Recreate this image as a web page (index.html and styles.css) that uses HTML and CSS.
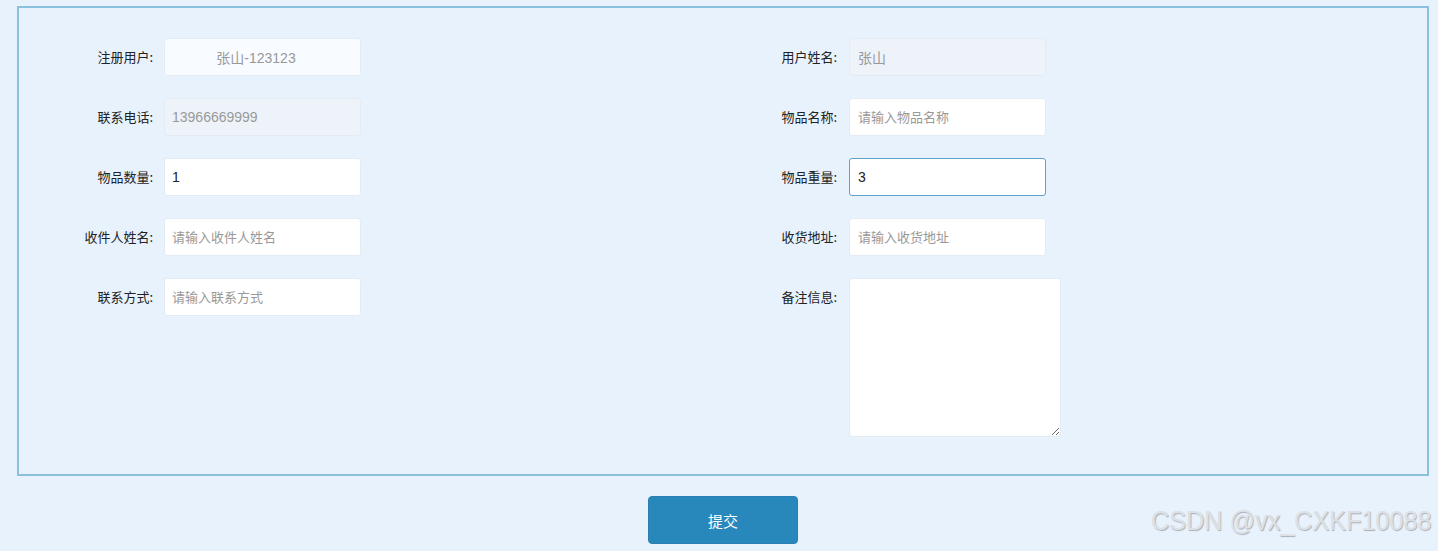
FILE: index.html
```
<!DOCTYPE html>
<html lang="zh-CN">
<head>
    <meta charset="UTF-8"/>
    <meta content="width=device-width, initial-scale=1.0" name="viewport"/>
    <title>物品寄送</title>
    <link rel="stylesheet" href="styles.css">
</head>
<body>
<form class="send-form">
    <div class="form-frame">
        <div class="form-col col-left">
            <div class="form-row">
                <label class="form-label">注册用户:</label>
                <input class="form-input readonly center" type="text" value="张山-123123" readonly>
            </div>
            <div class="form-row">
                <label class="form-label">联系电话:</label>
                <input class="form-input disabled" type="text" value="13966669999" readonly>
            </div>
            <div class="form-row">
                <label class="form-label">物品数量:</label>
                <input class="form-input" type="text" value="1">
            </div>
            <div class="form-row">
                <label class="form-label">收件人姓名:</label>
                <input class="form-input" type="text" placeholder="请输入收件人姓名">
            </div>
            <div class="form-row">
                <label class="form-label">联系方式:</label>
                <input class="form-input" type="text" placeholder="请输入联系方式">
            </div>
        </div>
        <div class="form-col">
            <div class="form-row">
                <label class="form-label">用户姓名:</label>
                <input class="form-input disabled" type="text" value="张山" readonly>
            </div>
            <div class="form-row">
                <label class="form-label">物品名称:</label>
                <input class="form-input" type="text" placeholder="请输入物品名称">
            </div>
            <div class="form-row">
                <label class="form-label">物品重量:</label>
                <input class="form-input focused" type="text" value="3">
            </div>
            <div class="form-row">
                <label class="form-label">收货地址:</label>
                <input class="form-input" type="text" placeholder="请输入收货地址">
            </div>
            <div class="form-row">
                <label class="form-label">备注信息:</label>
                <textarea class="form-textarea"></textarea>
            </div>
        </div>
    </div>

    <div class="form-actions">
        <button class="submit-button" type="button">提交</button>
    </div>
</form>

<div class="watermark">CSDN @vx_CXKF10088</div>
</body>
</html>
```
FILE: styles.css
```
/* Base */
body {
    margin: 0;
    padding: 6px 9px 0 17px;
    background-color: #e8f2fd;
    font-family: "Microsoft YaHei", "Noto Sans CJK SC", sans-serif;
    color: #333;
    height: 551px;
    box-sizing: border-box;
    overflow: hidden;
}

/* Frame holding both columns */
.form-frame {
    display: grid;
    grid-template-columns: 684px 1fr;
    border: 2px solid #8bc1dd;
    padding: 30px 0 37px 0;
}

.form-col {
    display: flex;
    flex-direction: column;
    gap: 22px;
}

.form-row {
    display: flex;
    align-items: flex-start;
}

.form-label {
    width: 134px;
    margin-right: 12px;
    text-align: right;
    font-size: 13px;
    line-height: 38px;
    height: 38px;
    color: #222;
    white-space: nowrap;
}

.col-left .form-label {
    margin-right: 11px;
}

/* Inputs */
.form-input {
    width: 197px;
    height: 38px;
    box-sizing: border-box;
    border: 1px solid #e3ecf5;
    border-radius: 3px;
    background: #fff;
    padding: 0 8px;
    font-family: "Liberation Sans", "Noto Sans CJK SC", sans-serif;
    font-size: 14px;
    color: #222;
    outline: none;
}

.col-left .form-input {
    padding-left: 7px;
}

.form-input::placeholder {
    font-family: "Noto Sans CJK SC", sans-serif;
    font-size: 13px;
    color: #999;
}

.form-input.readonly {
    background: #f8fbff;
    color: #999;
}

.form-input.center {
    text-align: center;
    padding-right: 20px;
}

.form-input.disabled {
    background: #edf3f9;
    color: #999;
}

.form-input.focused {
    border: 1px solid #5fa3cc;
}

.form-textarea {
    width: 212px;
    height: 159px;
    box-sizing: border-box;
    border: 1px solid #e3ecf5;
    border-radius: 3px;
    background: #fff;
    outline: none;
    margin: 0;
}

/* Submit */
.form-actions {
    display: flex;
    justify-content: center;
    padding-top: 20px;
}

.submit-button {
    width: 150px;
    height: 48px;
    border: 1px solid #2a7fb0;
    border-radius: 4px;
    background-color: #2888bc;
    color: #fff;
    font-family: "Microsoft YaHei", "Noto Sans CJK SC", sans-serif;
    font-size: 15px;
    cursor: pointer;
}

/* Blog watermark over the corner */
.watermark {
    position: absolute;
    left: 1151px;
    top: 505px;
    font-family: "Liberation Sans", Arial, sans-serif;
    font-size: 28px;
    color: #dde1e6;
    text-shadow: 1px 1px 1px #a9afb6;
    transform: scaleX(0.9);
    transform-origin: left center;
    white-space: nowrap;
}
```
